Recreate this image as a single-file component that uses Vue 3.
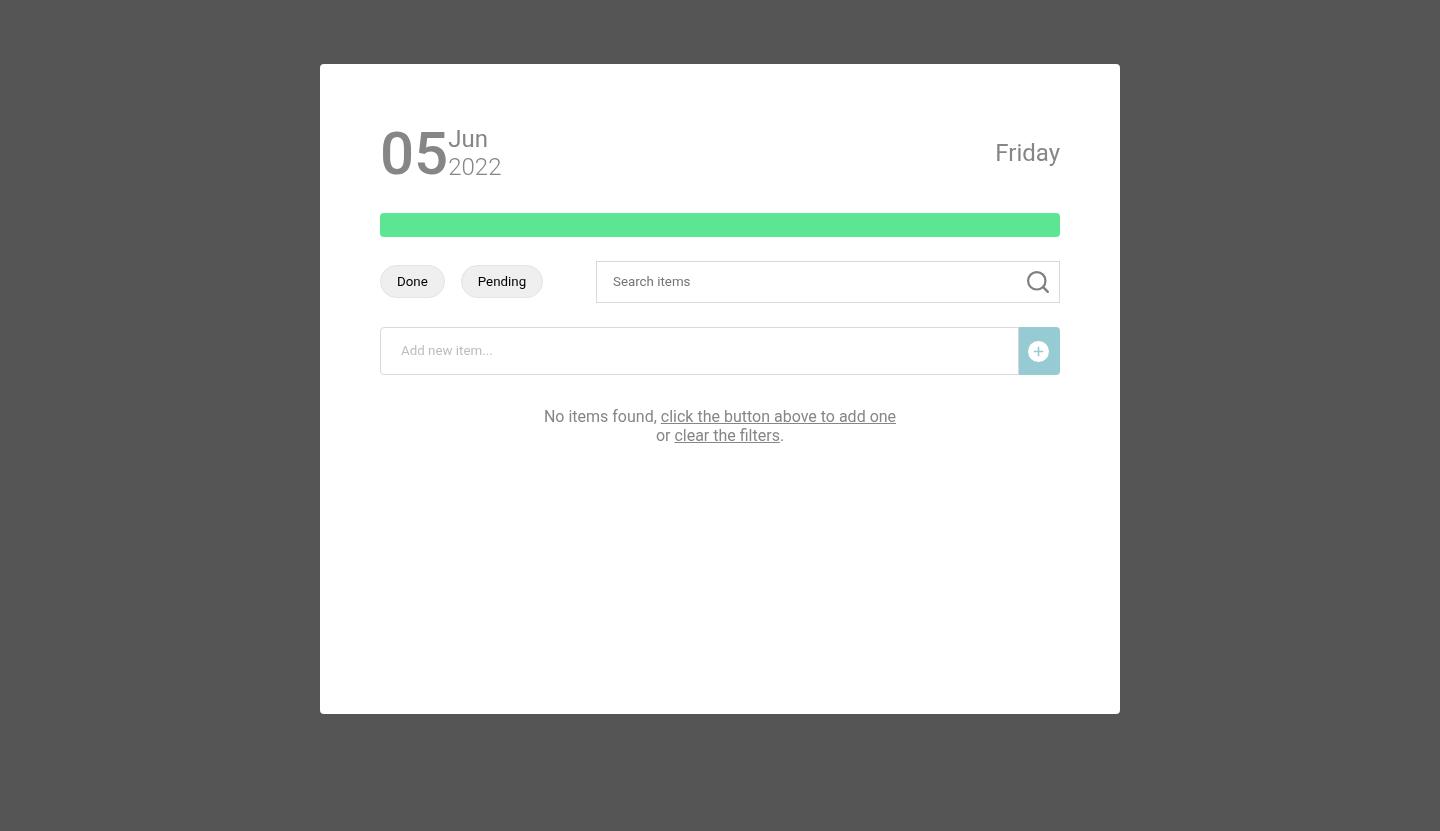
<template>
  <div class="page">
    <div class="card">
      <div class="date-row">
        <div class="date">
          <span class="day">05</span>
          <div class="month-year">
            <span class="month">Jun</span>
            <span class="year">2022</span>
          </div>
        </div>
        <span class="weekday">Friday</span>
      </div>

      <div class="progress"></div>

      <div class="filters">
        <div class="pills">
          <button class="pill">Done</button>
          <button class="pill">Pending</button>
        </div>
        <div class="search">
          <input class="search-input" type="text" placeholder="Search items" />
          <svg class="search-icon" width="23" height="23" viewBox="0 0 23 23" fill="none" stroke="#7f7f7f">
            <circle cx="9.8" cy="9.8" r="8.7" stroke-width="2.2" />
            <path d="M16.2 16.2l4.6 4.6" stroke-width="2.4" stroke-linecap="round" />
          </svg>
        </div>
      </div>

      <div class="add-row">
        <input class="add-input" type="text" placeholder="Add new item..." />
        <button class="add-btn">
          <svg width="21" height="21" viewBox="0 0 21 21">
            <circle cx="10.5" cy="10.5" r="10.5" fill="#fff" />
            <path d="M10.5 5.7v9.6M5.7 10.5h9.6" stroke="#97cbd4" stroke-width="1.6" />
          </svg>
        </button>
      </div>

      <p class="empty">
        No items found, <a class="link">click the button above to add one</a><br />
        or <a class="link">clear the filters</a>.
      </p>
    </div>
  </div>
</template>

<script setup>
</script>

<style>
html,
body {
  margin: 0;
  background: #555;
}
</style>

<style scoped>
.page {
  min-height: 831px;
  padding-top: 64px;
  box-sizing: border-box;
  background: #555;
  font-family: Roboto, "Liberation Sans", sans-serif;
}

.card {
  width: 800px;
  height: 650px;
  margin: 0 auto;
  padding: 60px;
  box-sizing: border-box;
  background: #fff;
  border-radius: 4px;
  will-change: transform;
}

.date-row {
  display: flex;
  justify-content: space-between;
  align-items: center;
  height: 58px;
}

.date {
  display: flex;
  align-items: center;
  color: #868686;
}

.day {
  font-size: 60px;
  font-weight: 550;
  line-height: 60px;
  padding-top: 2px;
}

.month-year {
  display: flex;
  flex-direction: column;
}

.month {
  font-size: 24px;
  line-height: 28px;
}

.year {
  font-size: 24px;
  font-weight: 300;
  line-height: 28px;
}

.weekday {
  font-size: 24px;
  color: #868686;
}

.progress {
  height: 24px;
  margin-top: 31px;
  background: #5ce592;
  border-radius: 4px;
}

.filters {
  display: flex;
  justify-content: space-between;
  align-items: center;
  margin-top: 24px;
}

.pills {
  display: flex;
  gap: 16px;
  padding-bottom: 1px;
}

.pill {
  height: 33px;
  padding: 0 16px;
  border: 1px solid #e3e3e3;
  border-radius: 17px;
  background: #efefef;
  color: #000;
  font: 400 13.33px Roboto, "Liberation Sans", sans-serif;
}

.search {
  display: flex;
  align-items: center;
  width: 464px;
  height: 42px;
  box-sizing: border-box;
  border: 1px solid #d9d9d9;
  padding: 0 9px 0 16px;
}

.search-input {
  flex: 1;
  min-width: 0;
  height: 18px;
  border: none;
  outline: none;
  padding: 0;
  font: 400 13.33px/18px Roboto, "Liberation Sans", sans-serif;
  color: #757575;
}

.search-input::placeholder {
  color: #757575;
  opacity: 1;
}

.search-icon {
  display: block;
}

.add-row {
  display: flex;
  height: 48px;
  margin-top: 24px;
}

.add-input {
  flex: 1;
  min-width: 0;
  box-sizing: border-box;
  border: 1px solid #d9d9d9;
  border-radius: 4px 0 0 4px;
  outline: none;
  padding: 0 20px 2px;
  font: 400 13.33px Roboto, "Liberation Sans", sans-serif;
}

.add-input::placeholder {
  color: #bdbdbd;
  opacity: 1;
}

.add-btn {
  display: flex;
  align-items: center;
  justify-content: center;
  width: 41px;
  padding: 0 2px 0 0;
  border: none;
  border-radius: 0 4px 4px 0;
  background: #97cbd4;
}

.empty {
  margin: 32px 0 0;
  text-align: center;
  font-size: 16px;
  line-height: 19px;
  color: #868686;
}

.link {
  color: #868686;
  text-decoration: underline;
}
</style>
